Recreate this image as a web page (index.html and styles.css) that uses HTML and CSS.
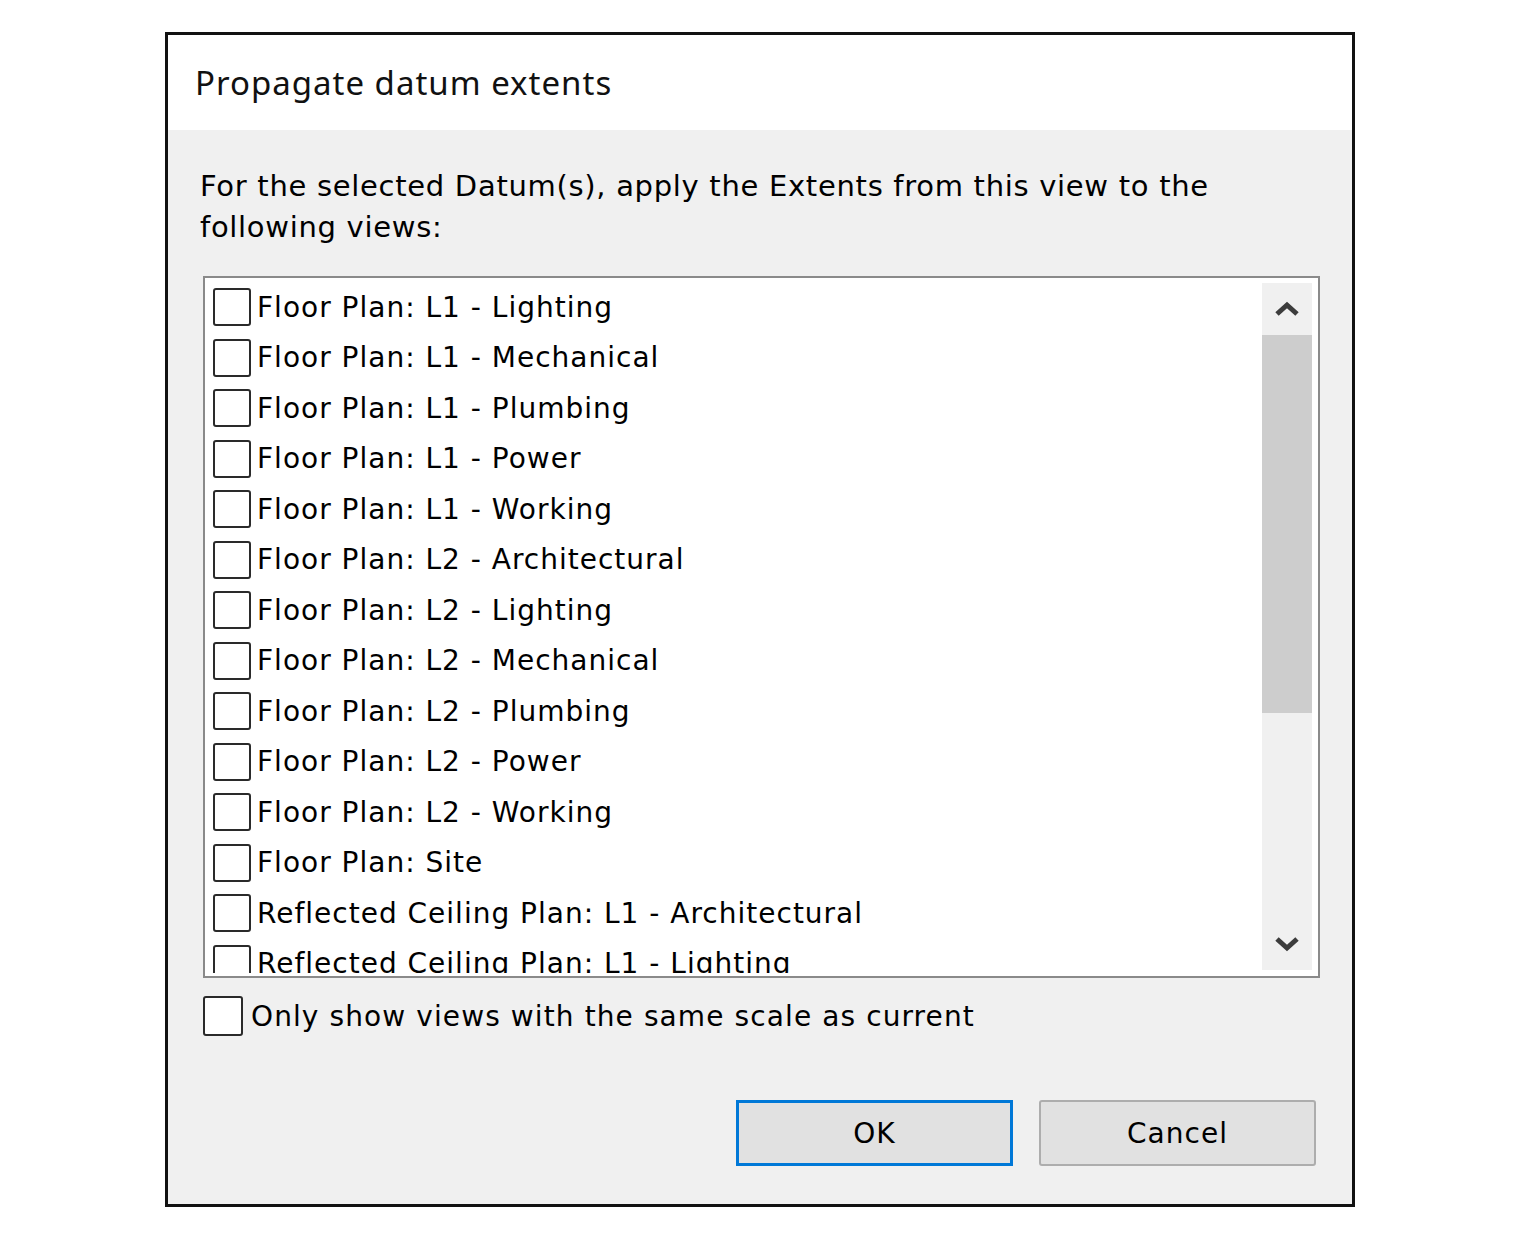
FILE: index.html
```html
<!DOCTYPE html>
<html lang="en">
<head>
    <meta charset="UTF-8">
    <title>Propagate datum extents</title>
    <link rel="stylesheet" href="styles.css">
</head>
<body>
    <div class="dialog">
        <div class="dialog-header">
            <h1 class="dialog-title">Propagate datum extents</h1>
        </div>
        <div class="dialog-body">
            <p class="intro">For the selected Datum(s), apply the Extents from this view to the following views:</p>

            <div class="view-list">
                <div class="view-items">
                    <label class="view-item"><span class="box"></span>Floor Plan: L1 - Lighting</label>
                    <label class="view-item"><span class="box"></span>Floor Plan: L1 - Mechanical</label>
                    <label class="view-item"><span class="box"></span>Floor Plan: L1 - Plumbing</label>
                    <label class="view-item"><span class="box"></span>Floor Plan: L1 - Power</label>
                    <label class="view-item"><span class="box"></span>Floor Plan: L1 - Working</label>
                    <label class="view-item"><span class="box"></span>Floor Plan: L2 - Architectural</label>
                    <label class="view-item"><span class="box"></span>Floor Plan: L2 - Lighting</label>
                    <label class="view-item"><span class="box"></span>Floor Plan: L2 - Mechanical</label>
                    <label class="view-item"><span class="box"></span>Floor Plan: L2 - Plumbing</label>
                    <label class="view-item"><span class="box"></span>Floor Plan: L2 - Power</label>
                    <label class="view-item"><span class="box"></span>Floor Plan: L2 - Working</label>
                    <label class="view-item"><span class="box"></span>Floor Plan: Site</label>
                    <label class="view-item"><span class="box"></span>Reflected Ceiling Plan: L1 - Architectural</label>
                    <label class="view-item"><span class="box"></span>Reflected Ceiling Plan: L1 - Lighting</label>
                </div>
                <div class="scrollbar">
                    <div class="scroll-btn">
                        <svg width="26" height="18" viewBox="0 0 26 18"><polyline points="3,14 13,5 23,14" fill="none" stroke="#3c3c3c" stroke-width="5"/></svg>
                    </div>
                    <div class="scroll-thumb"></div>
                    <div class="scroll-track"></div>
                    <div class="scroll-btn">
                        <svg width="26" height="18" viewBox="0 0 26 18"><polyline points="3,4 13,13 23,4" fill="none" stroke="#3c3c3c" stroke-width="5"/></svg>
                    </div>
                </div>
            </div>

            <label class="scale-option"><span class="box"></span>Only show views with the same scale as current</label>

            <div class="buttons">
                <button class="btn btn-default">OK</button>
                <button class="btn">Cancel</button>
            </div>
        </div>
    </div>
</body>
</html>
```

FILE: styles.css
```css
body {
    margin: 0;
    background: #fff;
    font-family: "DejaVu Sans", Verdana, sans-serif;
    color: #000;
}

.dialog {
    margin: 32px 0 0 165px;
    width: 1190px;
    height: 1175px;
    border: 3px solid #111;
    box-sizing: border-box;
    display: flex;
    flex-direction: column;
}

.dialog-header {
    height: 95px;
    flex: none;
    background: #fff;
    padding-left: 27px;
    display: flex;
    align-items: center;
}

.dialog-title {
    margin: 0;
    font-family: "Noto Sans", sans-serif;
    font-weight: normal;
    font-size: 33px;
    letter-spacing: 1px;
    color: #111;
}

.dialog-body {
    flex: 1;
    background: #f0f0f0;
    padding: 36px 32px 38px 32px;
}

.intro {
    margin: 0 0 28px 0;
    max-width: 1040px;
    font-size: 29px;
    letter-spacing: 0.7px;
    line-height: 41px;
    height: 82px;
}

.view-list {
    margin-left: 3px;
    height: 702px;
    border: 2px solid #8a8a8a;
    background: #fff;
    box-sizing: border-box;
    display: flex;
    overflow: hidden;
}

.view-items {
    flex: 1;
    padding: 4px 0 0 8px;
    margin-bottom: 3px;
    overflow: hidden;
}

.view-item {
    display: flex;
    align-items: center;
    height: 50.5px;
    font-size: 28px;
    letter-spacing: 1px;
    white-space: nowrap;
}

.box {
    width: 38px;
    height: 38px;
    border: 2px solid #2a2a2a;
    border-radius: 3px;
    background: #fff;
    box-sizing: border-box;
    margin-right: 6px;
    flex: none;
}

.scrollbar {
    width: 50px;
    margin: 5px 6px 6px 0;
    display: flex;
    flex-direction: column;
    background: #f0f0f0;
}

.scroll-btn {
    height: 52px;
    display: flex;
    align-items: center;
    justify-content: center;
}

.scroll-thumb {
    height: 378px;
    background: #cdcdcd;
}

.scroll-track {
    flex: 1;
}

.scale-option {
    display: flex;
    align-items: center;
    margin-top: 18px;
    height: 40px;
    font-size: 28px;
    letter-spacing: 1.1px;
}

.scale-option .box {
    width: 40px;
    height: 40px;
    margin-left: 3px;
    margin-right: 8px;
}

.buttons {
    margin-top: 64px;
    display: flex;
    justify-content: flex-end;
    gap: 26px;
    padding-right: 4px;
}

.btn {
    width: 277px;
    height: 66px;
    font-family: "DejaVu Sans", Verdana, sans-serif;
    font-size: 28px;
    letter-spacing: 1px;
    color: #000;
    background: #e1e1e1;
    border: 2px solid #adadad;
    border-radius: 3px;
}

.btn-default {
    border: 3px solid #0078d7;
    border-radius: 0;
}
```
